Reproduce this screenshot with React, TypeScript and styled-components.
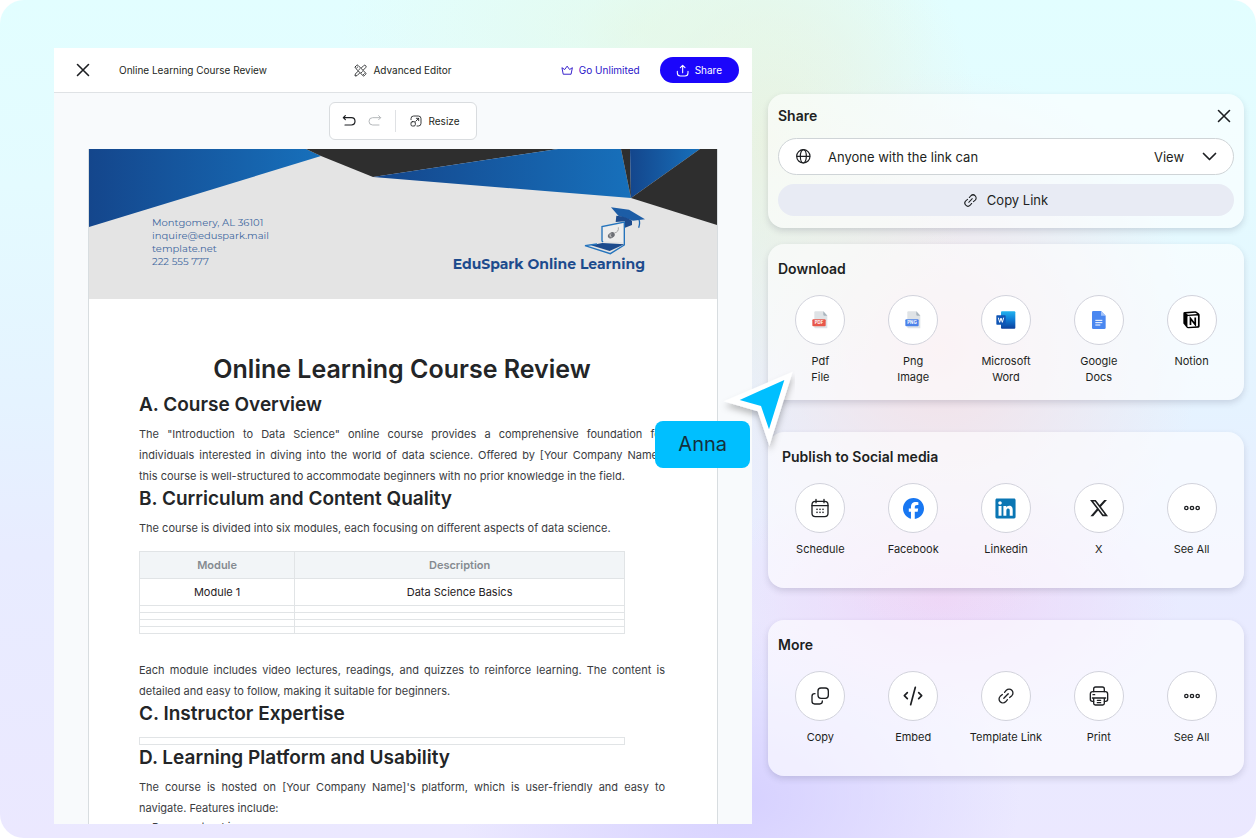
import React from "react";
import styled, { createGlobalStyle } from "styled-components";
import { FaFacebook, FaLinkedin, FaXTwitter } from "react-icons/fa6";

const ink = "#1d1f22";
const ui = `Inter, "Liberation Sans", sans-serif`;
const brandFont = `Montserrat, Inter, sans-serif`;

const GlobalStyle = createGlobalStyle`
  * { box-sizing: border-box; }
  body { margin: 0; background: #fff; font-family: ${ui}; color: ${ink}; }
  button, select { font: inherit; color: inherit; }
  h1, h2, h3, p, ul { margin: 0; }
`;

const Page = styled.div`
  min-height: 100vh;
  display: grid;
  grid-template-columns: minmax(0, 698fr) minmax(0, 476fr);
  gap: 16px;
  padding: 48px 12px 14px 54px;
  border-radius: 24px;
  background:
    radial-gradient(ellipse 300px 150px at 640px 30px, rgba(230, 248, 226, 0.6), transparent),
    radial-gradient(ellipse 210px 260px at 770px 140px, rgba(234, 240, 222, 0.9), transparent),
    radial-gradient(ellipse 260px 280px at 940px 350px, rgba(244, 225, 231, 1), transparent),
    radial-gradient(ellipse 240px 130px at 940px 600px, rgba(238, 212, 248, 0.9), transparent),
    radial-gradient(ellipse 280px 180px at 740px 800px, rgba(212, 206, 255, 0.9), transparent),
    linear-gradient(180deg, #e2feff 0%, #e4fbff 22%, #e5f3ff 48%, #e8ecff 66%, #ebe8ff 100%);
`;

const Stage = styled.div`
  position: relative;
  min-width: 0;
`;

const Editor = styled.main`
  height: calc(100vh - 62px);
  overflow: hidden;
  background: #f8fafc;
`;

const TopBar = styled.header`
  display: grid;
  grid-template-columns: 1fr auto 1fr;
  align-items: center;
  height: 45px;
  padding: 0 13px;
  background: #fff;
  border-bottom: 1px solid #dfe2e5;
  font-size: 10px;
`;

const BarStart = styled.div`
  display: flex;
  align-items: center;
  gap: 26px;
  padding-left: 6px;
`;

const BarEnd = styled.div`
  display: flex;
  align-items: center;
  justify-content: flex-end;
  gap: 20px;
`;

const IconButton = styled.button<{ $muted?: boolean }>`
  display: inline-flex;
  align-items: center;
  justify-content: center;
  width: 20px;
  height: 20px;
  padding: 0;
  border: 0;
  background: none;
  color: ${(p) => (p.$muted ? "#b5b8bb" : ink)};
`;

const PlainButton = styled.button<{ $color?: string }>`
  display: inline-flex;
  align-items: center;
  gap: 6px;
  padding: 0;
  border: 0;
  background: none;
  color: ${(p) => p.$color || ink};
`;

const PrimaryButton = styled(PlainButton)`
  height: 26px;
  padding: 0 17px 0 16px;
  border-radius: 13px;
  background: #1b06fb;
  color: #fff;
`;

const ToolStrip = styled.div`
  display: flex;
  align-items: center;
  width: max-content;
  height: 38px;
  margin: 9px auto;
  padding: 0 16px 0 9px;
  gap: 6px;
  background: #fff;
  border: 1px solid #d9dcdf;
  border-radius: 6px;
  font-size: 10px;
`;

const Divider = styled.span`
  width: 1px;
  height: 22px;
  margin: 0 8px 0 4px;
  background: #dfe1e4;
`;

const Sheet = styled.article`
  margin: 0 34px;
  background: #fff;
  border: 1px solid #d8dde0;
  border-top: 0;
`;

const Banner = styled.div`
  display: grid;
  height: 150px;
  background: #e4e4e4;
`;

const BannerArt = styled.svg`
  grid-area: 1 / 1;
  width: 100%;
  height: 150px;
`;

const BannerText = styled.div`
  grid-area: 1 / 1;
  display: flex;
  justify-content: space-between;
  padding: 58px 72px 0 63px;
  font-family: ${brandFont};
`;

const Contact = styled.address`
  padding-top: 9px;
  font-style: normal;
  font-size: 10px;
  line-height: 13px;
  color: #3f68a0;
`;

const Brand = styled.div`
  display: flex;
  flex-direction: column;
  align-items: flex-end;
  font-size: 14px;
  line-height: 18px;
  font-weight: 700;
  color: #1d4b8d;
`;

const Copy = styled.div`
  padding: 54px 52px 20px 50px;
  font-size: 11px;
  line-height: 21px;
  color: #3a3c3f;
`;

const DocTitle = styled.h1`
  margin-bottom: 8px;
  font-size: 25px;
  line-height: 32px;
  font-weight: 600;
  text-align: center;
  color: #232527;
`;

const Heading = styled.h2`
  margin-bottom: 8px;
  font-size: 19px;
  line-height: 23px;
  font-weight: 600;
  color: #232527;
`;

const Para = styled.p`
  text-align: justify;
`;

const DocTable = styled.table<{ $after: number }>`
  width: 486px;
  max-width: 100%;
  margin: 12px 0 ${(p) => p.$after}px;
  border-collapse: collapse;
  table-layout: fixed;
  text-align: center;
  line-height: 16px;
  color: #1f2124;

  th, td { height: 7px; padding: 0; border: 1px solid #e1e4e6; }
  th { height: 27px; background: #f2f5f7; color: #858b90; font-weight: 600; }
  th:first-child { width: 32%; }
`;

const TextCell = styled.td`
  && { height: 27px; }
`;

const List = styled.ul`
  padding-left: 13px;
  line-height: 16px;
`;

const CursorMark = styled.svg`
  position: absolute;
  z-index: 2;
  top: 318px;
  right: -43px;
  width: 80px;
  height: 90px;
`;

const NameTag = styled.div`
  position: absolute;
  z-index: 2;
  top: 373px;
  right: 2px;
  padding: 0 23px;
  border-radius: 8px;
  background: #00bfff;
  color: #14303c;
  font-size: 20px;
  line-height: 47px;
`;

const Panels = styled.aside`
  display: flex;
  flex-direction: column;
  gap: 32px;
  min-width: 0;
  padding-top: 46px;
`;

const PanelPair = styled.div`
  display: grid;
  gap: 16px;
`;

const Card = styled.section`
  padding: 14px 6px 0;
  min-height: 156px;
  border-radius: 16px;
  background: rgba(255, 255, 255, 0.6);
  box-shadow: 0 3px 6px rgba(60, 60, 90, 0.17);
`;

const ShareCard = styled(Card)`
  min-height: 134px;
  padding: 11px 10px;
`;

const CardTitle = styled.h3<{ $inset?: number }>`
  padding-left: ${(p) => p.$inset || 0}px;
  font-size: 14px;
  line-height: 22px;
  font-weight: 600;
`;

const CardHead = styled.div`
  display: flex;
  justify-content: space-between;
  align-items: center;
  margin-bottom: 11px;
`;

const Access = styled.div`
  position: relative;
  display: flex;
  align-items: center;
  height: 37px;
  margin-bottom: 9px;
  padding-left: 17px;
  border: 1px solid #cfd4d7;
  border-radius: 19px;
  background: #fff;
  font-size: 13px;

  label { flex: 1; padding-left: 17px; }
  select {
    height: 35px;
    padding: 0 48px 0 0;
    border: 0;
    background: transparent;
    appearance: none;
  }
`;

const Chevron = styled.svg`
  position: absolute;
  right: 16px;
  pointer-events: none;
`;

const CopyButton = styled.button`
  display: flex;
  align-items: center;
  justify-content: center;
  gap: 10px;
  width: 100%;
  height: 32px;
  border: 0;
  border-radius: 16px;
  background: #e8ebf4;
  font-size: 13px;
`;

const Actions = styled.div`
  display: grid;
  grid-template-columns: repeat(5, 1fr);
  margin-top: 15px;
`;

const Action = styled.button`
  display: flex;
  flex-direction: column;
  align-items: center;
  gap: 8px;
  padding: 0;
  border: 0;
  background: none;
  font-size: 11px;
  line-height: 16px;
  white-space: pre-line;
  text-align: center;
`;

const Disc = styled.span`
  display: flex;
  align-items: center;
  justify-content: center;
  width: 50px;
  height: 50px;
  border: 1px solid #d2d3dc;
  border-radius: 50%;
  background: #fff;
`;

type StrokeProps = { size: number; w?: number; box?: number; children: React.ReactNode };
const Stroke = ({ size, w = 1.5, box = 24, children }: StrokeProps) => (
  <svg width={size} height={size} viewBox={`0 0 ${box} ${box}`} fill="none" stroke="currentColor" strokeWidth={w} strokeLinecap="round" strokeLinejoin="round" aria-hidden="true">
    {children}
  </svg>
);

const CloseIcon = ({ size }: { size: number }) => (
  <Stroke size={size} w={1.6} box={14}><path d="M1.5 1.5l11 11M12.5 1.5l-11 11" /></Stroke>
);

const LinkIcon = ({ size }: { size: number }) => (
  <Stroke size={size} box={44} w={3.6}>
    <path d="M18 12l5-6a10.600 10.600 0 0 1 15 15l-6 5" />
    <path d="M26 32l-5 6a10.600 10.600 0 0 1-15-15l6-5" />
    <path d="M16 28L28 16" />
  </Stroke>
);

const FileIcon = ({ tag, color }: { tag: string; color: string }) => (
  <svg width="16" height="18" viewBox="0 0 48 54" aria-hidden="true">
    <path d="M10 1h24l12 13v38H10q-3 0-3-3V4q0-3 3-3z" fill="#dfe3e6" />
    <path d="M34 1l12 13H37q-3 0-3-3z" fill="#a9b5be" />
    <rect x="1" y="25" width="40" height="21" rx="3" fill={color} />
    <text x="21" y="40" textAnchor="middle" fontFamily="Inter, sans-serif" fontSize="13" fontWeight="700" fill="#fff">{tag}</text>
  </svg>
);

const WordIcon = () => (
  <svg width="20" height="18" viewBox="0 0 60 54" aria-hidden="true">
    <defs>
      <linearGradient id="wordPage" x1="0" y1="0" x2="0" y2="1">
        <stop offset="0" stopColor="#22b2ee" />
        <stop offset="0.45" stopColor="#0f7fd8" />
        <stop offset="1" stopColor="#0b3f9c" />
      </linearGradient>
    </defs>
    <rect x="15" y="1" width="43" height="52" rx="3" fill="url(#wordPage)" />
    <rect x="1" y="13" width="28" height="28" rx="2" fill="#0f55b5" />
    <path d="M7 20l4 14 4-13 4 13 4-14" fill="none" stroke="#fff" strokeWidth="3" />
  </svg>
);

const DocsIcon = () => (
  <svg width="14" height="18" viewBox="0 0 42 54" aria-hidden="true">
    <path d="M4 0h23l14 14v36q0 4-4 4H4q-4 0-4-4V4q0-4 4-4z" fill="#4a87f0" />
    <path d="M27 0l14 14H27z" fill="#a3c3fa" />
    <path d="M10 28h21M10 35h21M10 42h15" stroke="#fff" strokeWidth="3" />
  </svg>
);

const NotionIcon = () => (
  <svg width="17" height="18" viewBox="0 0 50 53" aria-hidden="true">
    <path d="M5 3L36 1q3 0 5 2l6 4q2 2 2 4v34q0 4-4 4l-30 2q-3 0-5-3L3 39q-2-2-2-4V7q0-4 4-4z" fill="#000" />
    <path d="M9 7l27-2 6 4-27 2z" fill="#fff" />
    <path d="M13 17q0-2 2-2l27-2q2 0 2 2v28q0 2-2 2l-27 2q-2 0-2-2z" fill="#fff" />
    <path d="M22 41V22l14 18V19" fill="none" stroke="#000" strokeWidth="5" />
  </svg>
);

const CalendarIcon = () => (
  <Stroke size={20} box={60} w={4}>
    <rect x="6" y="10" width="48" height="46" rx="10" />
    <path d="M6 23h48M18 4v10M42 4v10" />
    <path d="M21 34h.1M30 34h.1M39 34h.1M21 43h.1M30 43h.1M39 43h.1" strokeWidth="5" />
  </Stroke>
);

const DotsIcon = () => (
  <Stroke size={18} box={54} w={4}>
    <circle cx="10" cy="27" r="5" /><circle cx="27" cy="27" r="5" /><circle cx="44" cy="27" r="5" />
  </Stroke>
);

const CopyIcon = () => (
  <Stroke size={20} box={60} w={4}>
    <rect x="24" y="6" width="31" height="31" rx="9" />
    <path d="M15 23h-1q-8 0-8 8v15q0 8 8 8h15q8 0 8-8v-1" />
  </Stroke>
);

const EmbedIcon = () => (
  <Stroke size={20} box={60} w={5}>
    <path d="M13 20L4 29l9 9M47 20l9 9-9 9M37 4L23 56" />
  </Stroke>
);

const PrintIcon = () => (
  <Stroke size={20} box={60} w={4}>
    <path d="M14 17V9q0-6 6-6h20q6 0 6 6v8" />
    <path d="M14 46h-4q-6 0-6-6V24q0-7 7-7h38q7 0 7 7v16q0 6-6 6h-4" />
    <path d="M10 36h40M14 36v16q0 5 5 5h22q5 0 5-5V36M25 43h10M25 50h10M12 26h5" />
  </Stroke>
);

const BrandMark = () => (
  <svg width="62" height="48" viewBox="554 205 186 144" aria-hidden="true">
    <path d="M638 206l54 7 48 29-36 4-44-15z" fill="#1c5da6" />
    <path d="M654 231q28 1 47 15v13l-21 8v-19l-28 2z" fill="#1d4b8d" />
    <path d="M722 244q4 8-1 23" fill="none" stroke="#1c66b0" strokeWidth="4" />
    <path d="M578 320l34-7 66 4-44 20z" fill="#1d4b8d" />
    <path d="M614 267l60-14v58l-60-3z" fill="#ededed" />
    <path d="M614 310l-3-3v-43l67-14v69l-42 26-76-24 36-5" fill="none" stroke="#2474bd" strokeWidth="4" />
    <path d="M648 283q14-3 12-17" fill="none" stroke="#8a8a8a" strokeWidth="2" />
    <ellipse cx="639" cy="290" rx="11" ry="8" transform="rotate(-35 639 290)" fill="#6e7076" />
    <path d="M632 288l9 8M638 284l-3 12" stroke="#d5d5d5" strokeWidth="2" />
  </svg>
);

type Item = { label: string; icon: React.ReactNode };

const downloads: Item[] = [
  { label: "Pdf\nFile", icon: <FileIcon tag="PDF" color="#e8574a" /> },
  { label: "Png\nImage", icon: <FileIcon tag="PNG" color="#4b82ea" /> },
  { label: "Microsoft\nWord", icon: <WordIcon /> },
  { label: "Google\nDocs", icon: <DocsIcon /> },
  { label: "Notion", icon: <NotionIcon /> },
];

const social: Item[] = [
  { label: "Schedule", icon: <CalendarIcon /> },
  { label: "Facebook", icon: <FaFacebook size={21} color="#1877f2" /> },
  { label: "Linkedin", icon: <FaLinkedin size={23} color="#0a76b4" /> },
  { label: "X", icon: <FaXTwitter size={20} /> },
  { label: "See All", icon: <DotsIcon /> },
];

const more: Item[] = [
  { label: "Copy", icon: <CopyIcon /> },
  { label: "Embed", icon: <EmbedIcon /> },
  { label: "Template Link", icon: <LinkIcon size={16} /> },
  { label: "Print", icon: <PrintIcon /> },
  { label: "See All", icon: <DotsIcon /> },
];

const ActionCard = ({ title, items, inset = 4 }: { title: string; items: Item[]; inset?: number }) => (
  <Card>
    <CardTitle $inset={inset}>{title}</CardTitle>
    <Actions>
      {items.map((item) => (
        <Action key={item.label} type="button">
          <Disc>{item.icon}</Disc>
          {item.label}
        </Action>
      ))}
    </Actions>
  </Card>
);

export default function App() {
  return (
    <>
      <GlobalStyle />
      <Page>
        <Stage>
          <Editor>
            <TopBar>
              <BarStart>
                <IconButton type="button" aria-label="Close editor"><CloseIcon size={14} /></IconButton>
                <span>Online Learning Course Review</span>
              </BarStart>
              <PlainButton type="button">
                <Stroke size={13} box={39} w={2.6}>
                  <path d="M4 8l4-4q2-2 4 0l23 23q2 2 0 4l-4 4q-2 2-4 0L4 12q-2-2 0-4zM11 9l-3 3M17 15l-3 3M25 23l-3 3M31 29l-3 3" />
                  <path d="M22 12l7-7q3-3 6 0t0 6l-7 7M17 27l-8 8-6 1 1-6 8-8" />
                </Stroke>
                Advanced Editor
              </PlainButton>
              <BarEnd>
                <PlainButton type="button" $color="#2a14c9">
                  <Stroke size={12} box={39} w={3}>
                    <path d="M7 32L3 12l9 6 8-11 8 11 9-6-4 20z" />
                  </Stroke>
                  Go Unlimited
                </PlainButton>
                <PrimaryButton type="button">
                  <Stroke size={13} box={39} w={3.2}>
                    <path d="M20 26V4M13 11l7-7 7 7M4 22v5q0 9 9 9h14q9 0 9-9v-5" />
                  </Stroke>
                  Share
                </PrimaryButton>
              </BarEnd>
            </TopBar>

            <ToolStrip>
              <IconButton type="button" aria-label="Undo">
                <Stroke size={14} box={42} w={3.6}><path d="M10 5L4 11l6 6M4 11h24q11 0 11 11T28 33H9" /></Stroke>
              </IconButton>
              <IconButton type="button" aria-label="Redo" $muted>
                <Stroke size={14} box={42} w={3}><path d="M32 5l6 6-6 6M38 11H14Q3 11 3 22t11 11h19" /></Stroke>
              </IconButton>
              <Divider />
              <PlainButton type="button">
                <Stroke size={12} box={36} w={2.6}>
                  <path d="M3 14V11q0-8 8-8h14q8 0 8 8v14q0 8-8 8h-4M19 10h7v7M26 10l-9 9" />
                  <rect x="3" y="20" width="13" height="13" rx="4" />
                </Stroke>
                Resize
              </PlainButton>
            </ToolStrip>

            <Sheet>
              <Banner>
                <BannerArt viewBox="0 0 628 150" preserveAspectRatio="none" aria-hidden="true">
                  <defs>
                    <linearGradient id="wing"><stop offset="0" stopColor="#14468c" /><stop offset="1" stopColor="#1770bb" /></linearGradient>
                  </defs>
                  <path d="M0 0H217L232 7 0 78z" fill="url(#wing)" />
                  <path d="M217 0H469L284 28 232 7z" fill="#2e2e2e" />
                  <path d="M469 0H532L542 49 284 28z" fill="url(#wing)" />
                  <path d="M532 0H541L542 49z" fill="#2e2e2e" />
                  <path d="M541 0H611L542 49z" fill="url(#wing)" />
                  <path d="M611 0H628V76L542 49z" fill="#2e2e2e" />
                </BannerArt>
                <BannerText>
                  <Contact>
                    Montgomery, AL 36101<br />inquire@eduspark.mail<br />template.net<br />222 555 777
                  </Contact>
                  <Brand><BrandMark />EduSpark Online Learning</Brand>
                </BannerText>
              </Banner>
              <Copy>
                <DocTitle>Online Learning Course Review</DocTitle>
                <Heading>A. Course Overview</Heading>
                <Para>
                  The "Introduction to Data Science" online course provides a comprehensive foundation for individuals interested in diving into the world of data science. Offered by [Your Company Name], this{"\u00a0"}course is well-structured to accommodate beginners with no prior knowledge in the field.
                </Para>
                <Heading>B. Curriculum and Content Quality</Heading>
                <Para>The course is divided into six modules, each focusing on different aspects of data science.</Para>
                <DocTable $after={26}>
                  <thead><tr><th>Module</th><th>Description</th></tr></thead>
                  <tbody>
                    <tr><TextCell>Module 1</TextCell><TextCell>Data Science Basics</TextCell></tr>
                    {[0, 1, 2, 3].map((row) => <tr key={row}><td /><td /></tr>)}
                  </tbody>
                </DocTable>
                <Para>
                  Each module includes video lectures, readings, and quizzes to reinforce learning. The content is detailed and easy to follow, making it suitable for beginners.
                </Para>
                <Heading>C. Instructor Expertise</Heading>
                <DocTable $after={1}><tbody><tr><td /></tr></tbody></DocTable>
                <Heading>D. Learning Platform and Usability</Heading>
                <Para>
                  The course is hosted on [Your Company Name]'s platform, which is user-friendly and easy to navigate. Features include:
                </Para>
                <List><li>Progress tracking</li></List>
              </Copy>
            </Sheet>
          </Editor>
          <NameTag>Anna</NameTag>
          <CursorMark viewBox="224 78 240 270" aria-hidden="true">
            <defs>
              <filter id="lift" x="-20%" y="-20%" width="140%" height="150%">
                <feDropShadow dx="2" dy="14" stdDeviation="9" floodColor="#000" floodOpacity="0.25" />
              </filter>
            </defs>
            <path d="M250 184L457 95 387 318 352 214z" fill="#fff" filter="url(#lift)" />
            <path d="M298 180L432 120 386 268 362 198z" fill="#00bfff" />
          </CursorMark>
        </Stage>

        <Panels>
          <PanelPair>
            <ShareCard>
              <CardHead>
                <CardTitle>Share</CardTitle>
                <IconButton type="button" aria-label="Close share panel"><CloseIcon size={14} /></IconButton>
              </CardHead>
              <Access>
                <Stroke size={15} box={45} w={3.6}>
                  <circle cx="22" cy="22" r="20" />
                  <ellipse cx="22" cy="22" rx="9" ry="20" />
                  <path d="M3 22h38" />
                </Stroke>
                <label htmlFor="access">Anyone with the link can</label>
                <select id="access" defaultValue="View"><option>View</option><option>Edit</option></select>
                <Chevron width="15" height="9" viewBox="0 0 15 9" fill="none" stroke="currentColor" strokeWidth="1.7" strokeLinecap="round" strokeLinejoin="round" aria-hidden="true">
                  <path d="M1.5 1.5l6 6 6-6" />
                </Chevron>
              </Access>
              <CopyButton type="button"><LinkIcon size={13} />Copy Link</CopyButton>
            </ShareCard>
            <ActionCard title="Download" items={downloads} />
          </PanelPair>
          <ActionCard title="Publish to Social media" items={social} inset={8} />
          <ActionCard title="More" items={more} />
        </Panels>
      </Page>
    </>
  );
}
